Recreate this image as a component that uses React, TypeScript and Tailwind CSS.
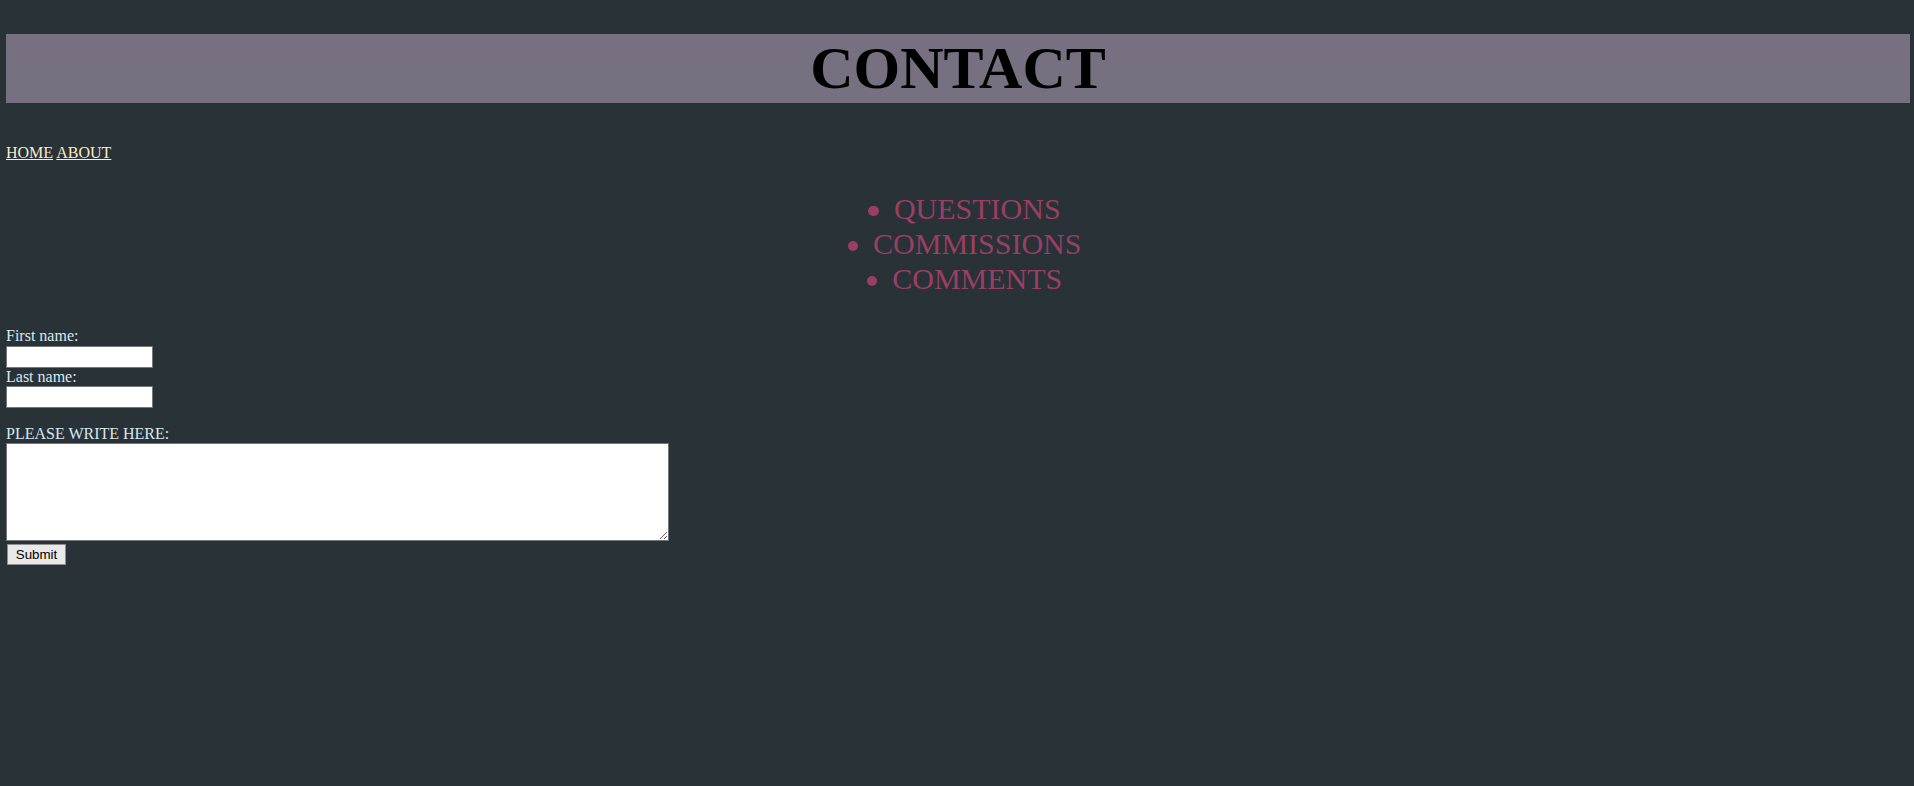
const topics = ['QUESTIONS', 'COMMISSIONS', 'COMMENTS'];

export default function App() {
  return (
    <div className="min-h-screen bg-[#293236] font-['Liberation_Serif','Times_New_Roman',serif] leading-[18.4px] pt-[34px] text-[16px]">
      {/* Title bar */}
      <div className="ml-[6px] mr-[4px] h-[69px] bg-[#767080]">
        <h1 className="text-center text-[60px] font-bold leading-[69px] text-black">CONTACT</h1>
      </div>

      {/* Nav */}
      <nav className="mt-[41px] px-[6px] text-[#fbecc8]">
        <a href="#" className="underline">HOME</a> <a href="#" className="underline">ABOUT</a>
      </nav>

      {/* Topics */}
      <ul className="mt-[29px] pl-[15px] text-center text-[30px] leading-[35px] text-[#9b3e64]">
        {topics.map((topic) => (
          <li key={topic}>
            <span className="mr-[15px] mb-[3px] inline-block h-[10.5px] w-[10.5px] rounded-full bg-[#9b3e64]" />
            {topic}
          </li>
        ))}
      </ul>

      {/* Form */}
      <form className="mt-[31px] px-[6px] text-[#d9e8f0]" onSubmit={(e) => e.preventDefault()}>
        <label className="block">First name:</label>
        <input type="text" className="block h-[22px] w-[147px] border border-[#767676] bg-white" />
        <label className="block">Last name:</label>
        <input type="text" className="block h-[22px] w-[147px] border border-[#767676] bg-white" />
        <div className="h-[16.4px]" />
        <label className="block">PLEASE WRITE HERE:</label>
        <textarea className="block h-[98px] w-[663px] border border-[#767676] bg-white" />
        <button
          type="submit"
          className="mt-[3px] ml-px h-[21px] w-[59px] border border-[#8f8f8f] bg-[#e9e9e9] font-['Liberation_Sans',Arial,sans-serif] text-[13.33px] leading-[normal] text-black"
        >
          Submit
        </button>
      </form>
    </div>
  );
}
